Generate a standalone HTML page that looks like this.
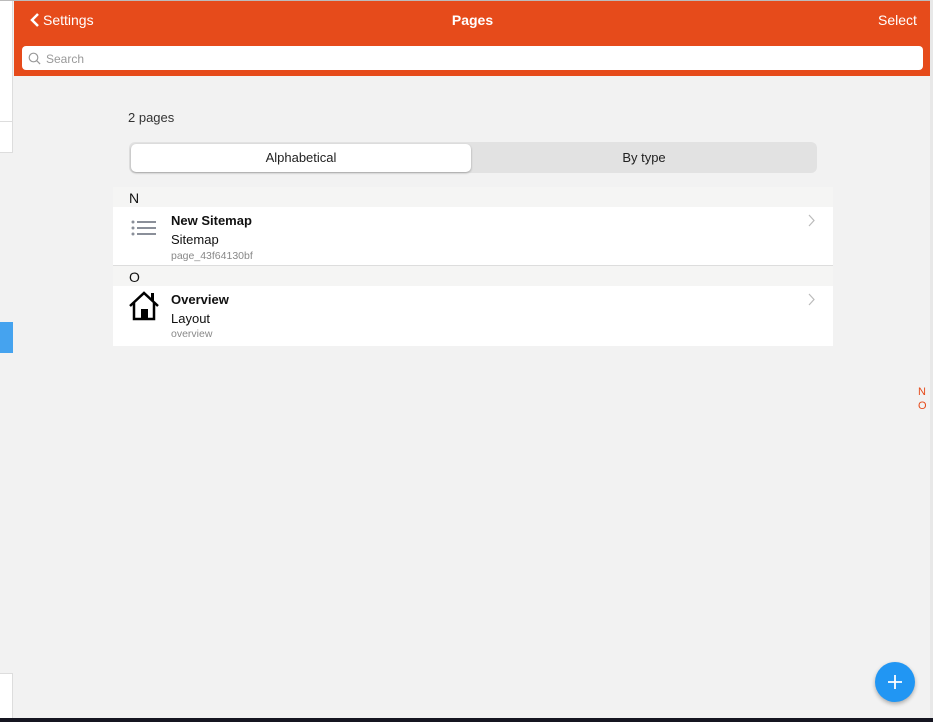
<!DOCTYPE html>
<html><head><style>
*{margin:0;padding:0;box-sizing:border-box}
body{width:933px;height:722px;overflow:hidden;background:#f2f2f2;font-family:"Liberation Sans",sans-serif;position:relative}
.a{position:absolute}
</style></head><body>
<div class="a" style="left:0;top:0;width:13px;height:722px;background:#fff;border-right:1px solid #ddd"></div>
<div class="a" style="left:0;top:121px;width:13px;height:1px;background:#ddd"></div>
<div class="a" style="left:0;top:152px;width:13px;height:522px;background:#f2f2f2;border-top:1px solid #ddd;border-bottom:1px solid #ddd"></div>
<div class="a" style="left:0;top:322px;width:13px;height:31px;background:#45a3ef"></div>
<div class="a" style="left:0;top:0;width:933px;height:1px;background:#bbb"></div>
<div class="a" style="left:14px;top:1px;width:916px;height:75px;background:#e64b1b"></div>
<div class="a" style="left:930px;top:0;width:3px;height:718px;background:#e8e8e8"></div>
<div class="a" style="left:0;top:718px;width:933px;height:4px;background:#151520"></div>
<svg class="a" style="left:30px;top:13px" width="10" height="14"><path d="M8 1L2 7l6 6" stroke="#fff" stroke-width="2.5" fill="none"/></svg>
<div class="a" style="left:43px;top:12px;color:#fff;font-size:14px">Settings</div>
<div class="a" style="left:0;width:945px;top:12px;text-align:center;color:#fff;font-size:14px;font-weight:bold">Pages</div>
<div class="a" style="left:878px;top:12px;color:#fff;font-size:14px">Select</div>
<div class="a" style="left:22px;top:46px;width:901px;height:24px;background:#fff;border-radius:4px"></div>
<svg class="a" style="left:28px;top:52px" width="13" height="13"><circle cx="5.5" cy="5.5" r="4.3" stroke="#999" fill="none" stroke-width="1.2"/><path d="M8.6 8.6l3.5 3.5" stroke="#999" stroke-width="1.2"/></svg>
<div class="a" style="left:46px;top:52px;color:#999;font-size:12px">Search</div>
<div class="a" style="left:128px;top:110px;color:#333;font-size:13px">2 pages</div>
<div class="a" style="left:129px;top:142px;width:688px;height:31px;background:#e2e2e2;border-radius:6px"></div>
<div class="a" style="left:131px;top:144px;width:340px;height:28px;background:#fff;border-radius:5px;box-shadow:0 1px 2px rgba(0,0,0,.3);text-align:center;line-height:28px;font-size:13px;color:#222">Alphabetical</div>
<div class="a" style="left:473px;top:144px;width:342px;height:28px;text-align:center;line-height:28px;font-size:13px;color:#222">By type</div>
<div class="a" style="left:113px;top:187px;width:720px;height:20px;background:#f5f5f4"></div>
<div class="a" style="left:129px;top:190px;font-size:14px;color:#111">N</div>
<div class="a" style="left:113px;top:207px;width:720px;height:59px;background:#fff;border-bottom:1px solid #ddd"></div>
<svg class="a" style="left:131px;top:220px" width="26" height="16"><g fill="#8a8f99"><circle cx="2" cy="2" r="1.5"/><circle cx="2" cy="8" r="1.5"/><circle cx="2" cy="14" r="1.5"/><rect x="6" y="1" width="19" height="2"/><rect x="6" y="7" width="19" height="2"/><rect x="6" y="13" width="19" height="2"/></g></svg>
<div class="a" style="left:171px;top:213px;font-size:13px;font-weight:bold;color:#111">New Sitemap</div>
<div class="a" style="left:171px;top:232px;font-size:13px;color:#111">Sitemap</div>
<div class="a" style="left:171px;top:250px;font-size:10.5px;color:#888">page_43f64130bf</div>
<svg class="a" style="left:808px;top:214px" width="8" height="13"><path d="M1 1l5 5.5L1 12" stroke="#bbb" fill="none" stroke-width="1.2"/></svg>
<div class="a" style="left:113px;top:266px;width:720px;height:20px;background:#f5f5f4"></div>
<div class="a" style="left:129px;top:269px;font-size:14px;color:#111">O</div>
<div class="a" style="left:113px;top:286px;width:720px;height:60px;background:#fff"></div>
<svg class="a" style="left:128px;top:291px" width="33" height="30"><path d="M2 15L16 2l14 13" stroke="#000" stroke-width="2.5" fill="none"/><path d="M6 12v16h20V12" stroke="#000" stroke-width="2.5" fill="none"/><rect x="13" y="18" width="7" height="10" fill="#000"/><rect x="23" y="2" width="3" height="8" fill="#000"/></svg>
<div class="a" style="left:171px;top:292px;font-size:13px;font-weight:bold;color:#111">Overview</div>
<div class="a" style="left:171px;top:311px;font-size:13px;color:#111">Layout</div>
<div class="a" style="left:171px;top:328px;font-size:10.5px;color:#888">overview</div>
<svg class="a" style="left:808px;top:293px" width="8" height="13"><path d="M1 1l5 5.5L1 12" stroke="#bbb" fill="none" stroke-width="1.2"/></svg>
<div class="a" style="left:918px;top:385px;font-size:11px;color:#e64b1b;line-height:14px">N<br>O</div>
<div class="a" style="left:875px;top:662px;width:40px;height:40px;border-radius:50%;background:#2196f3;box-shadow:0 2px 4px rgba(0,0,0,.3)"></div>
<svg class="a" style="left:887px;top:674px" width="16" height="16"><path d="M8 1v14M1 8h14" stroke="#fff" stroke-width="1.8"/></svg>
</body></html>
